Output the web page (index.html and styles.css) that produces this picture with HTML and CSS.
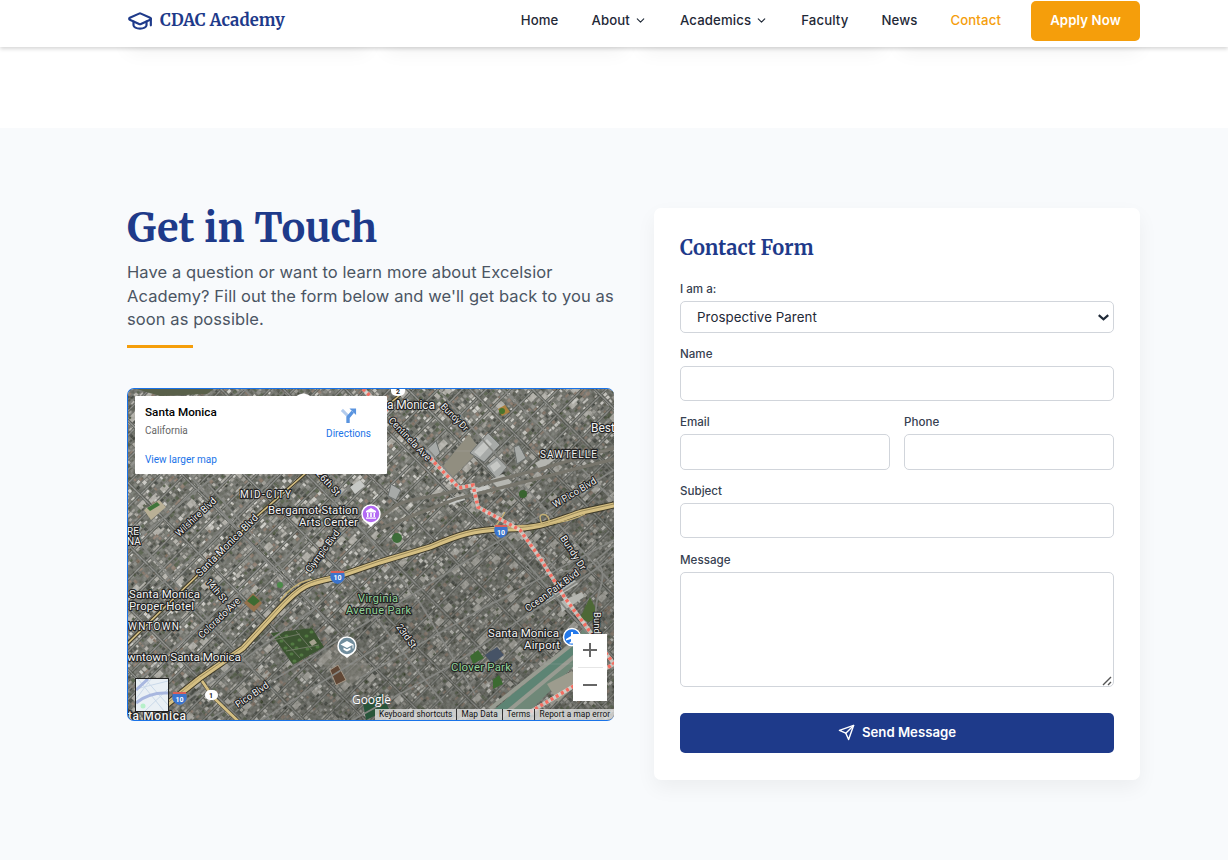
FILE: index.html
```html
<!DOCTYPE html>
<html lang="en">
<head>
<meta charset="utf-8">
<title>CDAC Academy - Contact</title>
<link rel="stylesheet" href="styles.css">
</head>
<body>
<header class="header">
  <div class="wrap header-row">
    <a class="brand">
      <svg class="brand-icon" viewBox="0 0 24 24"><path d="M21.42 10.92a1 1 0 0 0-.02-1.84L12.83 5.18a2 2 0 0 0-1.66 0L2.6 9.08a1 1 0 0 0 0 1.83l8.57 3.91a2 2 0 0 0 1.66 0z"/><path d="M22 10v6"/><path d="M6 12.5V16a6 3 0 0 0 12 0v-3.5"/></svg>
      <span class="brand-name">CDAC Academy</span>
    </a>
    <nav class="nav">
      <a>Home</a>
      <a>About<svg class="chev" viewBox="0 0 24 24"><path d="m6 9 6 6 6-6"/></svg></a>
      <a>Academics<svg class="chev" viewBox="0 0 24 24"><path d="m6 9 6 6 6-6"/></svg></a>
      <a>Faculty</a>
      <a>News</a>
      <a class="active">Contact</a>
      <a class="apply">Apply Now</a>
    </nav>
  </div>
</header>
<div class="previous">
  <div class="wrap tiles"><div class="tile"></div><div class="tile"></div><div class="tile"></div><div class="tile"></div></div>
</div>
<main class="contact">
  <div class="wrap columns">
    <section class="intro">
      <h2 class="title">Get in Touch</h2>
      <p class="lead">Have a question or want to learn more about Excelsior Academy? Fill out the form below and we'll get back to you as soon as possible.</p>
      <div class="rule"></div>
      <div class="map">
        <svg class="imagery" viewBox="127 388 487 333">
          <defs>
            <filter id="grain" x="0" y="0" width="100%" height="100%">
              <feTurbulence type="fractalNoise" baseFrequency=".25" numOctaves="3" seed="8"/>
              <feColorMatrix values="1.3 0 0 0 -.24  1.3 0 0 0 -.24  1.3 0 0 0 -.27  0 0 0 0 .18"/>
            </filter>
            <filter id="soft"><feGaussianBlur stdDeviation=".3"/></filter>
            <linearGradient id="shade" x1="0" y1="0" x2="1" y2="1"><stop offset=".42" stop-color="#2b2d28" stop-opacity="0"/><stop offset=".65" stop-color="#2b2d28" stop-opacity=".26"/></linearGradient>
          </defs>
          <rect x="127" y="388" width="487" height="333" fill="#6a6b65"/>
          <g id="blocks" filter="url(#soft)"></g>
          <rect x="127" y="388" width="487" height="333" fill="url(#shade)"/>
          <rect x="127" y="388" width="487" height="333" filter="url(#grain)"/>
          <g class="parks">
            <path d="M271 633 312 628 324 647 293 665Z" fill="#3c5531"/>
            <path id="trees" stroke="#527a42" stroke-width="3" stroke-linecap="round" d="M276 636h1M281 641h1M286 636h1M285 648h1M291 654h1M296 648h1M301 655h1M307 649h1M312 642h1M317 647h1M306 636h1M311 632h1M299 640h1M292 644h1M294 661h1"/>
            <path d="M278 634 300 658M273 640 300 634M286 651 319 645M296 631 312 650" stroke="#7b8370" stroke-width=".8"/>
            <path d="M309 642l5-3 3 4-5 3z" fill="#a5a28f"/>
            <path d="M244 603 253 593 262 603 254 612Z" fill="#95714c"/><path d="M247 601 253 595 260 601 254 606Z" fill="#3d6b32"/>
            <path d="M144 510 159 500 166 507 151 520Z" fill="#b9b096"/><path d="M147 508 157 502 160 505 150 511Z" fill="#40753a"/>
            <circle cx="397" cy="538" r="5" fill="#3d6d38"/><circle cx="523" cy="494" r="4" fill="#39642f"/><circle cx="280" cy="585" r="3" fill="#4a8a48"/>
            <path d="M498 409 505 405 510 412 502 416Z" fill="#ad813e"/><circle cx="502" cy="411" r="3" fill="#48732d"/>
            <path d="M493 680 499 675 503 684 493 689ZM470 656 478 650 484 658 473 664Z" fill="#3c6a31"/>
            <path d="M580 618 590 597 600 617 588 622Z" fill="#4d6836"/>
            <path d="M363 703 382 694 389 709 366 720Z" fill="#28553a"/>
            <path d="M318 658 340 640 372 668 344 690Z" fill="#8b8981" opacity=".5"/>
            <path d="M330 670 338 665 346 680 336 685Z" fill="#604735" stroke="#a59887"/>
            <path d="M133 388 215 388 207 394 160 396Z" fill="#59604a"/>
          </g>
          <g class="warehouses">
            <path d="M443 466 469 434 480 450 451 479Z" fill="#918e80"/>
            <path d="M470 453 488 433 500 445 484 462ZM486 466 497 457 507 467 497 479ZM514 447 519 445 526 458 517 464ZM391 484 401 490 396 500 388 496ZM424 452 436 441 440 453 430 463Z" fill="#a7aaa8" stroke="#6b6f6d"/>
            <path d="M474 452 487 439 492 444 480 457ZM490 466 497 461 501 466 494 472ZM447 499 464 495 465 500 449 505ZM470 490 488 485 489 489 471 494ZM372 470 383 462 388 468 377 476ZM350 487 360 480 365 486 355 494Z" fill="#c6c8c5"/>
            <path d="M490 480 503 474 512 482 502 492ZM535 463 559 449 564 453 540 470ZM545 595 575 580 578 584 546 604ZM560 602 582 592 584 597 562 612Z" fill="#b5b6b1"/>
            <path d="M485 655 497 647 504 655 492 664Z" fill="#465366"/>
          </g>
          <g class="runway">
            <path d="M483 721 512 694 573 648 584 627 600 638 550 691 520 721Z" fill="#6f8878"/>
            <path d="M495 714 594 632" stroke="#5d8474" stroke-width="8"/>
            <path d="M501 717 598 637M490 709 580 638" stroke="#989b91" stroke-width="4"/>
            <path d="M547 684 572 671 580 680 558 702Z" fill="#9d9c8e"/>
          </g>
          <g class="streets">
            <path d="M127 613 202 550 308 443 354 400M127 691 216 611 284 560 350 485M180 705 318 606M207 721 614 470M360 678 480 610 614 540M351 721 452 665 545 603 614 557M127 470 245 388M127 548 277 424M260 721 405 630"/>
            <path d="M127 529 253 669M208 484 327 621M292 440 420 603 475 694M370 610 443 703M420 440 614 664M440 392 614 586M502 388 614 501M161 443 310 611M243 388 345 489"/>
            <path class="rail" d="M380 517C394 509 391 505 412 500L447 493 533 471 614 448M381 528 456 499 532 480 614 459"/>
            <path d="M596 560C612 578 594 590 596 614L593 648M540 550 558 572 587 568 614 545"/>
          </g>
          <path class="road-case thin-case" d="M127 644 205 568 256 517 316 464 400 395M200 678 213 697 238 721"/>
          <path class="road thin" d="M127 644 205 568 256 517 316 464 400 395"/>
          <path class="road spur" d="M200 678 213 697 238 721"/>
          <path class="road-case" d="M160 710 200 678 243 648 278 610C302 584 309 583 333 578L380 562 430 547C460 534 474 530 502 529 540 530 562 518 582 512L614 505"/>
          <path class="road" d="M160 710 200 678 243 648 278 610C302 584 309 583 333 578L380 562 430 547C460 534 474 530 502 529 540 530 562 518 582 512L614 505"/>
          <path class="lane" d="M160 709 200 677 243 647 278 609C302 583 309 582 333 577L380 561 430 546C460 533 474 529 502 528 540 529 562 517 582 511L614 504"/>
          <path class="ramp" d="M183 690 200 677M280 601Q292 584 311 579M494 526C502 525 555 530 585 514M543 526Q536 512 546 515 553 521 545 526M495 527Q502 518 505 512"/>
          <path class="tile-line" d="M127 451H614M127 664H614"/>
          <path class="border-light" d="M363 389 388 413M430 458 459 488 473 485 478 507 520 530 540 558 565 598 614 664 584 680 530 712"/>
          <path class="border-red" d="M363 389 388 413M430 458 459 488 473 485 478 507 520 530 540 558 565 598 614 664 584 680 530 712"/>
          <g class="labels">
            <text x="387" y="409" font-size="12" textLength="48">a Monica</text>
            <text transform="translate(440 407) rotate(45)" font-size="9.5" textLength="35">Bundy Dr</text>
            <text transform="translate(388 421) rotate(46)" font-size="9.5" textLength="56">Centinela Ave</text>
            <text x="591" y="432" font-size="12">Best</text>
            <text x="540" y="458" font-size="10" textLength="57">SAWTELLE</text>
            <text transform="translate(555 508) rotate(-31)" font-size="9.5" textLength="49">W Pico Blvd</text>
            <text transform="translate(560 538) rotate(57)" font-size="9.5" textLength="39">Bundy Dr</text>
            <text transform="translate(316 474) rotate(48)" font-size="9.5" textLength="30">26th St</text>
            <text x="240" y="498" font-size="10" textLength="51">MID-CITY</text>
            <text x="268" y="514" font-size="11.5" textLength="90">Bergamot Station</text>
            <text x="299" y="526" font-size="11.5" textLength="59">Arts Center</text>
            <text transform="translate(179 537) rotate(-43)" font-size="9.5" textLength="52">Wilshire Blvd</text>
            <text transform="translate(200 577) rotate(-45)" font-size="10" textLength="83">Santa Monica Blvd</text>
            <text transform="translate(310 573) rotate(-53)" font-size="9.5" textLength="50">Olympic Blvd</text>
            <text x="127" y="535" font-size="10">RE</text><text x="127" y="545" font-size="10">NA</text>
            <text x="129" y="598" font-size="11.500" textLength="71">Santa Monica</text>
            <text x="129" y="610" font-size="11.500" textLength="65">Proper Hotel</text>
            <text x="128" y="630" font-size="10" textLength="51">WNTOWN</text>
            <text x="127" y="661" font-size="11.800" textLength="114">wntown Santa Monica</text>
            <text transform="translate(205 582) rotate(49)" font-size="9.5" textLength="28">14th St</text>
            <text transform="translate(202 639) rotate(-44)" font-size="9.5" textLength="54">Colorado Ave</text>
            <text transform="translate(238 708) rotate(-34)" font-size="9.5" textLength="38">Pico Blvd</text>
            <text transform="translate(396 627) rotate(54)" font-size="9.5" textLength="27">23rd St</text>
            <text transform="translate(528 612) rotate(-36)" font-size="9.5" textLength="64">Ocean Park Blvd</text>
            <text transform="translate(594 612) rotate(90)" font-size="9.5">Bundy Dr</text>
            <text x="488" y="637" font-size="11.500" textLength="71">Santa Monica</text>
            <text x="524" y="649" font-size="11.500" textLength="36">Airport</text>
            <g class="green"><text x="358" y="601.500" font-size="11" textLength="40">Virginia</text><text x="346" y="613.500" font-size="11" textLength="65">Avenue Park</text><text x="451" y="671" font-size="11.500" textLength="60">Clover Park</text></g>
            <text x="128" y="719.500" font-size="12" font-weight="500" textLength="58">ta Monica</text>
          </g>
          <g class="shield"><path d="M331 572h13c2 6 0 10-6.500 12-6.500-2-8.500-6-6.500-12Z"/><path class="cap" d="M331 571h13v2h-13z"/><text x="337.500" y="580">10</text></g>
          <g class="shield"><path d="M495 526h12c2 6 0 10-6 12-6-2-8-6-6-12Z"/><path class="cap" d="M495 525h12v2h-12z"/><text x="501" y="535">10</text></g>
          <g class="shield"><path d="M173 693h13c2 6 0 10-6.500 12-6.500-2-8.500-6-6.500-12Z"/><path class="cap" d="M173 692h13v2h-13z"/><text x="179.500" y="702">10</text></g>
          <rect x="205" y="690" width="13" height="10" rx="5" fill="#fff"/><text x="209" y="698" class="route">1</text>
          <path d="M391 388h14v3q0 5-7 5t-7-5z" fill="#fff"/><text x="396" y="394" class="route">2</text>
          <path d="M295 397q8-7 17 0z" fill="#fff"/>
          <g><path d="M366 522 371 527 376 522Z" fill="#fff"/><circle cx="371" cy="514" r="9" fill="#b36af3" stroke="#fff" stroke-width="1.500"/><path d="M366 512.500V511l5-3 5 3v1.500zM367 513h1.500v4H367zM370.200 513h1.600v4h-1.600zM373.500 513h1.500v4h-1.500zM366 517.500h10v1.200h-10z" fill="#fff"/></g>
          <g><path d="M342 654 347 658 352 654Z" fill="#fff"/><circle cx="347" cy="646" r="9" fill="#718d9d" stroke="#fff" stroke-width="1.500"/><path d="M340.500 644.500 347 641l6.500 3.500v4h-1v-3.500L347 648zM343.500 647.500l3.500 1.800 3.500-1.800v2.300L347 651.500l-3.500-1.700z" fill="#fff"/></g>
          <circle cx="572" cy="637" r="8.500" fill="#2479ea" stroke="#fff" stroke-width="1.500"/><path d="M571 632h2v4l5 3v1.500l-5-1.500v2.500l1.500 1v1h-5v-1l1.500-1V639l-5 1.500V639l5-3z" fill="#fff"/>
          <text class="google" x="352" y="704" textLength="39">Google</text>
        </svg>
        <div class="place">
          <div class="place-text"><strong>Santa Monica</strong><span>California</span><a>View larger map</a></div>
          <div class="directions"><svg viewBox="0 0 18 18"><path d="M2 3 9 10" stroke="#b2cbed" stroke-width="3.200"/><path d="M8.500 17v-6l5-6" stroke="#5a94df" stroke-width="3.600"/><path d="M10 1.500h7v7z" fill="#5a94df"/></svg><a>Directions</a></div>
        </div>
        <div class="layers"><svg viewBox="0 0 32 32"><path fill="#eaf0f5" d="M0 0h32v32H0z"/><path d="M2 0 28 32M9 0 32 26M0 10 32 2M0 20 15 0M9 32 32 10" stroke="#cad9e9"/><path d="M0 11 12 0M0 24Q13 13 32 14" stroke="#a8b7df" stroke-width="3"/><circle cx="7" cy="27" r="2.500" fill="#b6f0c9"/></svg></div>
        <div class="zoom"><span class="plus"></span><i></i><span class="minus"></span></div>
        <div class="credits"><span>Keyboard shortcuts</span><span>Map Data</span><span>Terms</span><span>Report a map error</span></div>
      </div>
    </section>
    <form class="card">
      <h3 class="form-title">Contact Form</h3>
      <label class="field">I am a:<select><option>Prospective Parent</option></select><svg class="caret" viewBox="0 0 10 6"><path d="M.7.9 5 4.700 9.300.9"/></svg></label>
      <label class="field">Name<input type="text"></label>
      <div class="pair"><label class="field">Email<input type="email"></label><label class="field">Phone<input type="tel"></label></div>
      <label class="field">Subject<input type="text"></label>
      <label class="field message">Message<textarea></textarea><svg class="grip" viewBox="0 0 10 10"><path d="M1 9 9 1M6 9 9 6"/></svg></label>
      <button class="send" type="button"><svg viewBox="0 0 24 24"><path d="m22 2-7 20-4-9-9-4Z"/><path d="M22 2 11 13"/></svg>Send Message</button>
    </form>
  </div>
</main>
<script src="map.js"></script>
</body>
</html>
```
FILE: styles.css
```css
* { box-sizing: border-box; }
body { margin: 0; height: 867px; overflow: hidden; background: #fff; color: #1f2937; font-family: Inter, "Liberation Sans", sans-serif; }
svg { display: block; fill: none; }
.wrap { width: 1013px; margin-left: 127px; }
.header { position: relative; z-index: 2; height: 47px; background: #fff; box-shadow: 0 2px 4px rgba(0,0,0,.16); }
.header-row { display: flex; justify-content: space-between; padding-top: 1px; height: 41px; }
.brand { display: flex; align-items: center; gap: 7px; height: 39px; color: #1e3a8a; }
.brand-icon { width: 26px; height: 26px; stroke: currentColor; stroke-width: 2; stroke-linecap: round; stroke-linejoin: round; }
.brand-name, .title, .form-title { font-family: Merriweather, "DejaVu Serif Condensed", "DejaVu Serif", serif; font-weight: 700; color: #1e3a8a; }
.brand-name { font-size: 16.6px; letter-spacing: .05px; white-space: nowrap; }
.nav { display: flex; align-items: flex-start; gap: 33px; font-size: 13.2px; font-weight: 500; letter-spacing: .12px; white-space: nowrap; }
.nav a { display: flex; align-items: center; height: 38px; }
.nav .active { color: #f59e0b; }
.chev { width: 13px; height: 13px; margin: 1px 0 0 4px; stroke: currentColor; stroke-width: 2; stroke-linecap: round; stroke-linejoin: round; }
.nav .apply { justify-content: center; width: 109px; height: 40px; margin-left: -3px; padding-bottom: 2px; border-radius: 5px; background: #f59e0b; color: #fff; font-weight: 600; }
.previous { height: 81px; overflow: hidden; }
.tiles { display: grid; grid-template-columns: repeat(4, 1fr); gap: 17px; }
.tile { height: 20px; margin-top: -22px; border-radius: 7px; box-shadow: 0 7px 20px rgba(0,0,0,.05); }
.contact { height: 732px; padding-top: 80px; background: #f8fafc; }
.columns { display: grid; grid-template-columns: 487px 486px; gap: 40px; align-items: start; }
.title { margin: 0; font-size: 39.8px; line-height: 40px; letter-spacing: .06px; white-space: nowrap; }
.lead { margin: 13px 0 0; color: #4b5563; font-size: 16.5px; line-height: 23.5px; letter-spacing: .08px; }
.rule { width: 66px; height: 3px; margin-top: 13px; background: #f59e0b; }
.map { position: relative; height: 333px; margin-top: 40px; overflow: hidden; border-radius: 7px; font-family: Roboto, sans-serif; border: 1px solid #1a73e8; border-right: 0; }
.imagery { width: 487px; height: 333px; margin: -1px 0 0 -1px; }
.streets path { stroke: #858682; stroke-width: 1.7; }
.streets .rail { stroke: #77756c; stroke-width: 3.2; }
.road-case { stroke: #3f3a29; stroke-width: 7; }
.road { stroke: #d5bf83; stroke-width: 5; }
.lane { stroke: #8d7d52; stroke-width: .8; }
.thin-case { stroke-width: 3.5; }
.thin { stroke-width: 1.6; }
.spur { stroke-width: 2.8; }
.ramp { stroke: #c6b176; stroke-width: 1.4; }
.tile-line { stroke: #bbb; stroke-opacity: .22; }
.border-light { stroke: #e4ddd7; stroke-width: 4; stroke-opacity: .75; }
.border-red { stroke: #f36d61; stroke-width: 3.5; stroke-dasharray: 3 3; }
.labels { fill: #f2f2f2; stroke: #242424; stroke-width: 2.3px; stroke-linejoin: round; paint-order: stroke; font-family: Roboto, sans-serif; }
.labels .green { fill: #91d499; }
.shield path { fill: #3b74cc; }
.shield .cap { fill: #d96058; }
.shield text { fill: #fff; font: 700 7px Roboto, sans-serif; text-anchor: middle; }
.route { fill: #222; font: 700 7px Roboto, sans-serif; }
.google { fill: #fff; stroke: #555; stroke-width: .8px; paint-order: stroke; font: 500 12px "Open Sans", sans-serif; }
.place { position: absolute; left: 7px; top: 7px; display: flex; justify-content: space-between; width: 252px; height: 78px; padding: 8px 16px 0 10px; background: #fff; border-radius: 1px; }
.place a { color: #1a73e8; }
.place-text { display: flex; flex-direction: column; font-size: 10px; line-height: 14px; }
.place-text strong { font-size: 11.7px; line-height: 16px; font-weight: 500; color: #000; }
.place-text span { margin-top: 4px; color: #666; }
.place-text a { margin-top: 15px; }
.directions { display: flex; flex-direction: column; align-items: center; font-size: 10px; }
.directions svg { width: 17px; height: 17px; margin-top: 3px; }
.directions a { margin-top: 4px; }
.layers { position: absolute; left: 7px; top: 289px; width: 34px; height: 34px; border: 1px solid #222; }
.zoom { position: absolute; left: 445px; top: 245px; display: flex; flex-direction: column; align-items: center; justify-content: space-between; width: 34px; height: 67px; padding: 9px 0; background: #fff; }
.zoom i { width: 25px; height: 1px; background: #e6e6e6; }
.plus, .minus { width: 14px; height: 14px; background: linear-gradient(#666,#666) center / 14px 2px no-repeat; }
.plus { background: linear-gradient(#666,#666) center / 14px 2px no-repeat, linear-gradient(#666,#666) center / 2px 14px no-repeat; }
.credits { position: absolute; right: 0; bottom: 0; display: flex; width: 239px; height: 11px; background: rgba(225,225,225,.8); color: #111; font-size: 8.3px; line-height: 11px; letter-spacing: .08px; white-space: nowrap; }
.credits span { padding: 0 4px; border-left: 1px solid #333; }
.credits span:first-child { border: 0; }
.card { height: 572px; padding: 26px; border-radius: 7px; background: #fff; box-shadow: 0 8px 20px rgba(0,0,0,.05); }
.form-title { margin: 0 0 18.9px; font-size: 20px; line-height: 28px; }
.field { position: relative; display: block; margin-bottom: 13px; font-size: 11.6px; line-height: 17px; font-weight: 500; color: #374151; }
.field input, .field select, .field textarea { display: block; width: 100%; height: 35.5px; margin: 3px 0 0; border: 1px solid #d1d5db; border-radius: 5px; background: #fff; color: #1f2937; font: 13.3px Inter, sans-serif; }
.field select { appearance: none; height: 32px; padding: 0 0 0 16px; letter-spacing: .06px; }
.caret { position: absolute; right: 5px; bottom: 12px; width: 11px; height: 7px; stroke: #1f2937; stroke-width: 2; }
.message { padding-top: .6px; }
.field textarea { height: 115px; margin-top: 2.9px; resize: none; }
.grip { position: absolute; right: 2px; bottom: 1px; width: 10px; height: 10px; stroke: #555; stroke-width: 1.4; }
.pair { display: grid; grid-template-columns: 1fr 1fr; gap: 14px; }
.send { display: flex; align-items: center; justify-content: center; gap: 7px; width: 100%; height: 40px; margin-top: 26px; padding-bottom: 2px; border: 0; border-radius: 5px; background: #1e3a8a; color: #fff; font: 600 13.2px Inter, sans-serif; }
.send svg { width: 17px; height: 17px; stroke: currentColor; stroke-width: 2; stroke-linecap: round; stroke-linejoin: round; }
```
FILE: map.js
```javascript
// Rooftops, yards and trees laid along the city's diagonal street grid.
(function () {
  var seed = 71;
  function rnd() { seed = (seed * 16807) % 2147483647; return seed / 2147483647; }
  var colors = ['#3c413a', '#52564d', '#62655c', '#757870', '#878882', '#9c9b94', '#b4b2ab', '#d3d2cc', '#887668', '#4c5641'];
  var paths = colors.map(function () { return ''; });
  for (var v = -340; v < 340; v += 4.25) {
    for (var u = -350; u < 350; u += 4) {
      var x = (u + v) * 0.707 + 370;
      var y = (v - u) * 0.707 + 555;
      if (x < 115 || x > 625 || y < 375 || y > 735) { rnd(); continue; }
      var w = 2 + rnd() * 2.2, h = 1.8 + rnd() * 2.2;
      var ix = Math.floor(rnd() * colors.length);
      if (rnd() < 0.03) { w = 8; h = 6; ix = 6; }
      paths[ix] += 'M' + u + ' ' + v + 'h' + w.toFixed(1) + 'v' + h.toFixed(1) + 'h-' + w.toFixed(1) + 'z';
    }
  }
  var grid = '';
  for (var k = -340; k < 350; k += 17) {
    grid += '<path d="M-350 ' + (k - 1) + 'H350" stroke="#4b4e48" stroke-width="2.8"/><path d="M-350 ' + (k - 1) + 'H350" stroke="#898a86" stroke-width="1.3"/>';
  }
  for (var n = -340; n < 350; n += 44) {
    grid += '<path d="M' + n + ' -350V350" stroke="#4b4e48" stroke-width="3"/><path d="M' + n + ' -350V350" stroke="#898a86" stroke-width="1.4"/>';
  }
  document.getElementById('blocks').innerHTML = '<g transform="translate(370 555) rotate(-45)">' + paths.map(function (d, i) { return '<path fill="' + colors[i] + '" d="' + d + '"/>'; }).join('') + grid + '</g>';
})();
```
